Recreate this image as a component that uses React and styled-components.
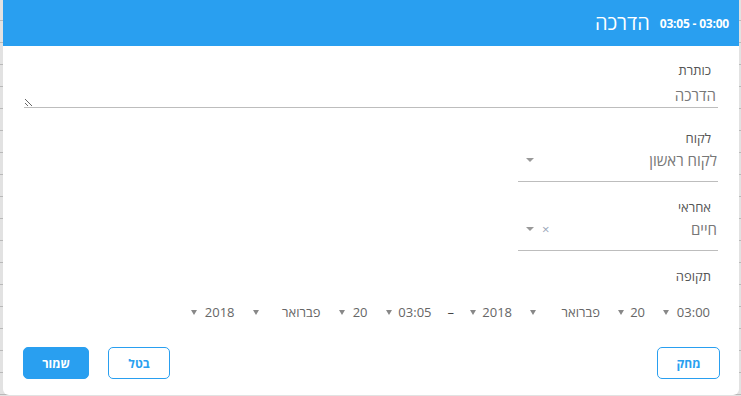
import React from "react";
import styled, { createGlobalStyle } from "styled-components";

const Global = createGlobalStyle`
  html, body { margin: 0; padding: 0; }
  body {
    width: 741px;
    height: 396px;
    overflow: hidden;
    font-family: "Open Sans", "Liberation Sans", "DejaVu Sans", sans-serif;
    background-color: #e2e2e2;
    background-image: repeating-linear-gradient(
      to bottom,
      transparent 0px,
      transparent 20px,
      #b9b9b9 20px,
      #b9b9b9 21px,
      transparent 21px,
      transparent 22px
    );
  }
`;

const Page = styled.div`
  display: flex;
  padding: 0 2px 1px 3px;
  height: 396px;
  box-sizing: border-box;
`;

const Modal = styled.div`
  flex: 1;
  display: flex;
  flex-direction: column;
  background: #fff;
  border-radius: 0 0 6px 6px;
  overflow: hidden;
  direction: rtl;
`;

const Header = styled.div`
  height: 46px;
  background: #299ff0;
  display: flex;
  align-items: center;
  gap: 10px;
  padding: 0 10px 0 0;
  color: #fff;
  flex-shrink: 0;
`;

const Time = styled.span`
  direction: ltr;
  font-size: 12px;
  font-weight: 700;
  letter-spacing: -0.2px;
`;

const Title = styled.span`
  font-size: 20px;
  font-weight: 400;
  padding-bottom: 2px;
`;

const Body = styled.div`
  flex: 1;
  display: flex;
  flex-direction: column;
  padding: 15px 21px 16px 21px;
`;

const Field = styled.div`
  display: flex;
  flex-direction: column;
  width: ${(p) => p.$width || "auto"};
  margin-top: ${(p) => p.$top || 0}px;
`;

const Label = styled.label`
  font-size: 13px;
  line-height: 18px;
  color: #555;
  padding-right: 7px;
`;

const TextArea = styled.textarea`
  font-family: inherit;
  font-size: 15px;
  line-height: 20px;
  color: #777;
  border: none;
  border-bottom: 1px solid #bdbdbd;
  outline: none;
  height: 22px;
  padding: 6px 2px 0 0;
  resize: vertical;
  direction: rtl;
  background: transparent;
`;

const SelectBox = styled.div`
  display: flex;
  align-items: center;
  gap: 8px;
  border-bottom: 1px solid #bdbdbd;
  padding: 3px 1px 11px 0;
  line-height: 20px;
`;

const Value = styled.span`
  flex: 1;
  font-size: 15px;
  color: #777;
`;

const Clear = styled.span`
  font-size: 13px;
  color: #9aa5b8;
  line-height: 14px;
`;

const Caret = styled.span`
  width: 0;
  height: 0;
  border-left: ${(p) => p.$w || 4}px solid transparent;
  border-right: ${(p) => p.$w || 4}px solid transparent;
  border-top: ${(p) => p.$h || 4}px solid ${(p) => p.$color || "#999"};
  margin-left: ${(p) => p.$ml || 0}px;
  flex-shrink: 0;
`;

const PeriodRow = styled.div`
  display: flex;
  align-items: center;
  gap: 18px;
  margin-top: 18px;
  padding-right: 8px;
`;

const DateSelect = styled.div`
  display: flex;
  align-items: center;
  justify-content: space-between;
  width: ${(p) => p.$w}px;
  font-size: 13px;
  color: #666;
  line-height: 18px;
`;

const Dash = styled.span`
  font-size: 13px;
  color: #444;
  margin: 0 -2px;
`;

const Footer = styled.div`
  margin: auto -2px 0 -1px;
  display: flex;
  align-items: center;
  gap: 19px;
`;

const Button = styled.button`
  font-family: inherit;
  font-size: 12px;
  font-weight: 700;
  height: 32px;
  width: ${(p) => p.$w}px;
  border-radius: 5px;
  border: 1px solid #299ff0;
  background: ${(p) => (p.$primary ? "#299ff0" : "#fff")};
  color: ${(p) => (p.$primary ? "#fff" : "#299ff0")};
  margin-left: ${(p) => (p.$push ? "auto" : "0")};
  cursor: pointer;
  padding: 0;
`;

const DSel = ({ w, children }) => (
  <DateSelect $w={w}>
    <span>{children}</span>
    <Caret $w={3} $h={5} $color="#888" />
  </DateSelect>
);

export default function App() {
  return (
    <>
      <Global />
      <Page>
        <Modal>
          <Header>
            <Time>03:05 - 03:00</Time>
            <Title>הדרכה</Title>
          </Header>
          <Body>
            <Field>
              <Label>כותרת</Label>
              <TextArea defaultValue="הדרכה" />
            </Field>
            <Field $width="200px" $top={21}>
              <Label>לקוח</Label>
              <SelectBox>
                <Value>לקוח ראשון</Value>
                <Caret $ml={8} />
              </SelectBox>
            </Field>
            <Field $width="200px" $top={16}>
              <Label>אחראי</Label>
              <SelectBox>
                <Value>חיים</Value>
                <Clear>×</Clear>
                <Caret $ml={8} />
              </SelectBox>
            </Field>
            <Field $top={16}>
              <Label>תקופה</Label>
              <PeriodRow>
                <DSel w={47}>03:00</DSel>
                <DSel w={27}>20</DSel>
                <DSel w={70}>פברואר</DSel>
                <DSel w={42}>2018</DSel>
                <Dash>–</Dash>
                <DSel w={46}>03:05</DSel>
                <DSel w={29}>20</DSel>
                <DSel w={68}>פברואר</DSel>
                <DSel w={44}>2018</DSel>
              </PeriodRow>
            </Field>
            <Footer>
              <Button $w={63} $push>מחק</Button>
              <Button $w={62}>בטל</Button>
              <Button $w={66} $primary>שמור</Button>
            </Footer>
          </Body>
        </Modal>
      </Page>
    </>
  );
}
